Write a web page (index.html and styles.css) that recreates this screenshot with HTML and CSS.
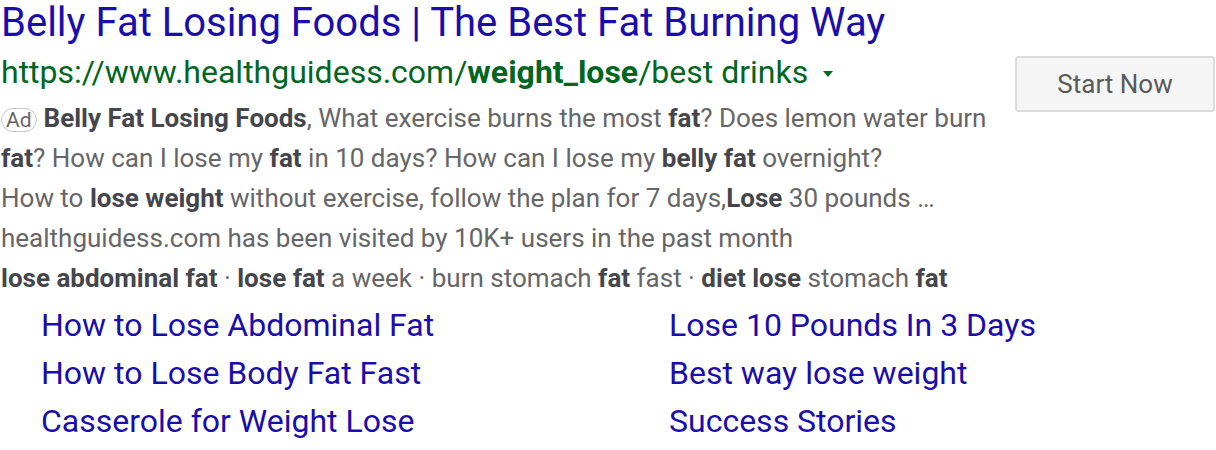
FILE: index.html
```html
<!DOCTYPE html>
<html>
<head>
<meta charset="utf-8">
<link rel="stylesheet" href="styles.css">
</head>
<body>
<div class="ad">
  <div class="main">
    <a class="title">Belly Fat Losing Foods | The Best Fat Burning Way</a>
    <div class="url">https://www.healthguidess.com/<b>weight_lose</b>/best drinks<span class="arrow"></span></div>
    <div class="desc">
      <div class="line"><span class="badge">Ad</span><b>Belly Fat Losing Foods</b>, What exercise burns the most <b>fat</b>? Does lemon water burn</div>
      <div class="line"><b>fat</b>? How can I lose my <b>fat</b> in 10 days? How can I lose my <b>belly fat</b> overnight?</div>
      <div class="line">How to <b>lose weight</b> without exercise, follow the plan for 7 days,<b>Lose</b> 30 pounds …</div>
      <div class="line">healthguidess.com has been visited by 10K+ users in the past month</div>
      <div class="line"><b>lose abdominal fat</b> · <b>lose fat</b> a week · burn stomach <b>fat</b> fast · <b>diet lose</b> stomach <b>fat</b></div>
    </div>
    <div class="sitelinks">
      <a>How to Lose Abdominal Fat</a>
      <a>Lose 10 Pounds In 3 Days</a>
      <a>How to Lose Body Fat Fast</a>
      <a>Best way lose weight</a>
      <a>Casserole for Weight Lose</a>
      <a>Success Stories</a>
    </div>
  </div>
  <div class="side">
    <button class="cta">Start Now</button>
  </div>
</div>
</body>
</html>
```

FILE: styles.css
```css
html, body {
  margin: 0;
  padding: 0;
  background: #fff;
}
body {
  font-family: Roboto, "Liberation Sans", sans-serif;
}
.ad {
  display: flex;
  justify-content: space-between;
  padding: 0 1px 0 1px;
}
.main {
  display: flex;
  flex-direction: column;
  flex: 1;
  min-width: 0;
}
.title {
  color: #1a0dab;
  font-size: 40px;
  line-height: 46px;
  white-space: nowrap;
}
.url {
  color: #006621;
  font-size: 32px;
  line-height: 52px;
  display: flex;
  align-items: center;
  white-space: pre;
}
.url b {
  font-weight: 700;
}
.arrow {
  display: inline-block;
  width: 0;
  height: 0;
  border-left: 5px solid transparent;
  border-right: 5px solid transparent;
  border-top: 6px solid #006621;
  margin-left: 15px;
  margin-top: 4px;
}
.desc {
  color: #666;
  font-size: 26px;
  line-height: 40px;
}
.desc b {
  color: #44464b;
  font-weight: 700;
}
.line {
  white-space: nowrap;
}
.badge {
  display: inline-block;
  box-sizing: border-box;
  height: 24px;
  border: 1px solid #c8c8c8;
  border-radius: 12px;
  font-size: 21px;
  line-height: 22px;
  padding: 0 4px;
  margin-right: 7px;
  color: #666;
  vertical-align: 0px;
}
.sitelinks {
  display: grid;
  grid-template-columns: 628px auto;
  padding-left: 40px;
  margin-top: 3px;
}
.sitelinks a {
  color: #1a0dab;
  font-size: 32px;
  line-height: 48px;
  white-space: nowrap;
}
.side {
  padding-top: 56px;
}
.cta {
  width: 200px;
  height: 56px;
  background: #f5f5f5;
  border: 2px solid #dcdcdc;
  border-radius: 3px;
  color: #5a5a5a;
  font-family: Roboto, "Liberation Sans", sans-serif;
  font-size: 26px;
}
```
